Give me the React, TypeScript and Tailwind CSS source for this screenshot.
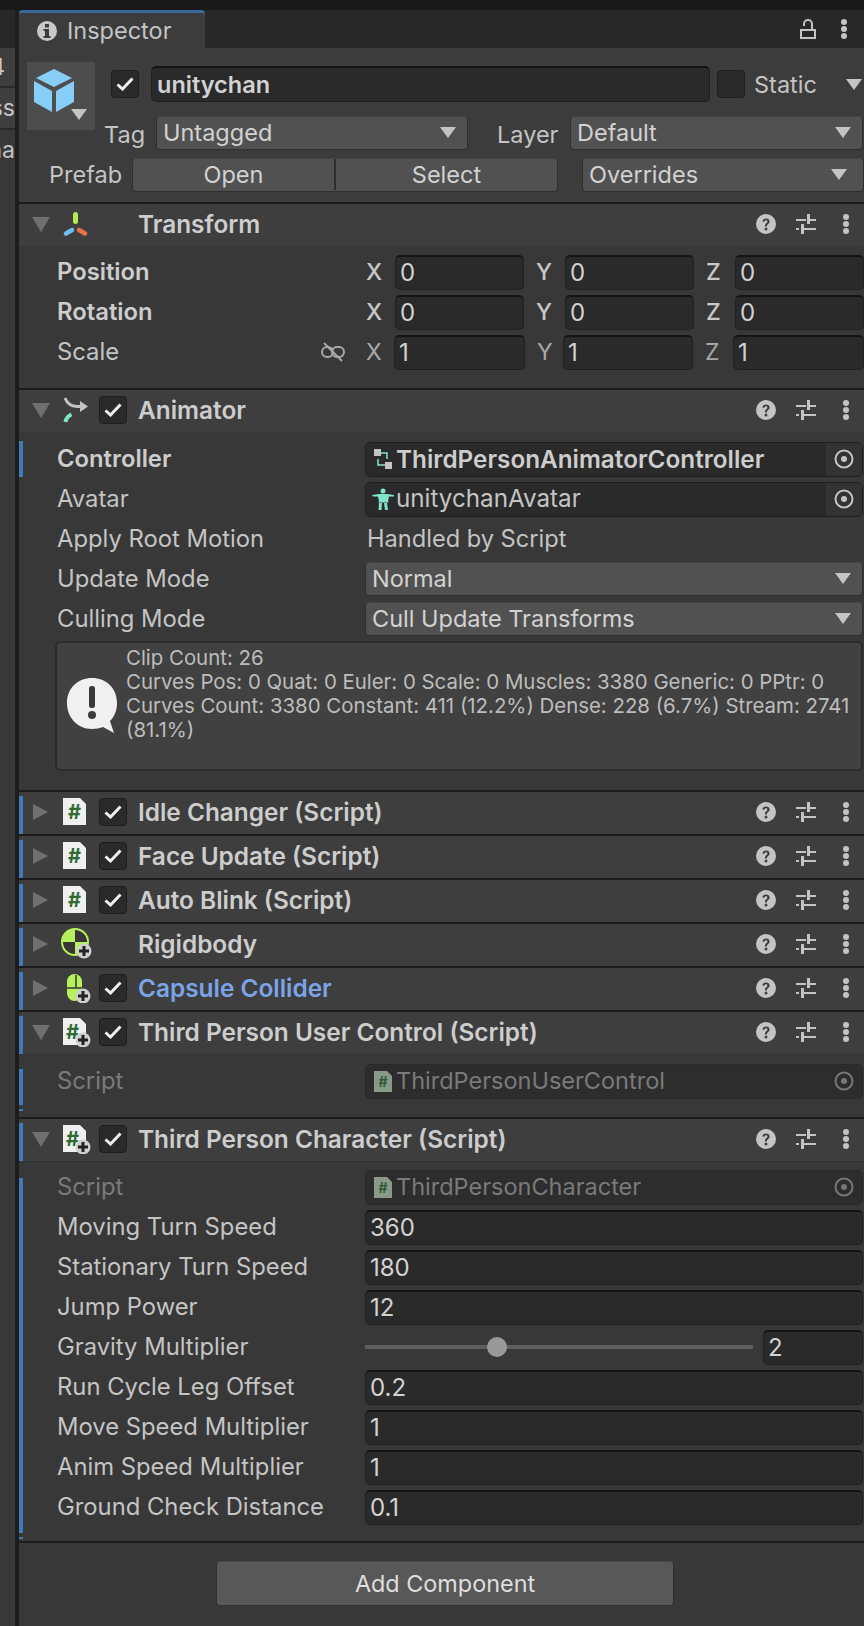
import React from 'react';

const FONT = 'font-["Inter","Liberation_Sans",sans-serif]';

function TriDown({ className = 'fill-[#c4c4c4]' }: { className?: string }) {
  return (
    <svg width="16" height="11" viewBox="0 0 16 11" className={`shrink-0 ${className}`}>
      <path d="M0 0h16l-8 11z" />
    </svg>
  );
}

function Foldout({ open }: { open: boolean }) {
  return (
    <div className="w-[34px] shrink-0 flex justify-center pl-[1px]">
      {open ? (
        <svg width="18" height="15" viewBox="0 0 18 15" className="fill-[#6f6f6f]">
          <path d="M0 0h18l-9 15z" />
        </svg>
      ) : (
        <svg width="15" height="16" viewBox="0 0 15 16" className="fill-[#6f6f6f]">
          <path d="M0 0l15 8-15 8z" />
        </svg>
      )}
    </div>
  );
}

function Checkbox({ checked = true }: { checked?: boolean }) {
  return (
    <div className="w-[28px] h-[28px] shrink-0 rounded-[4px] bg-[#2a2a2a] border border-[#1e1e1e] flex items-center justify-center">
      {checked && (
        <svg width="18" height="14" viewBox="0 0 18 14" fill="none" stroke="#f0f0f0" strokeWidth="3">
          <path d="M1.5 7.5l5 4.5 10-10.5" />
        </svg>
      )}
    </div>
  );
}

function Dots() {
  return (
    <svg width="8" height="20" viewBox="0 0 8 20" className="fill-[#c4c4c4] shrink-0">
      <circle cx="4" cy="3" r="3" />
      <circle cx="4" cy="10" r="3" />
      <circle cx="4" cy="17" r="3" />
    </svg>
  );
}

function HeaderTools() {
  return (
    <div className="flex items-center ml-auto">
      <svg width="20" height="20" viewBox="0 0 20 20">
        <circle cx="10" cy="10" r="10" fill="#c4c4c4" />
        <path d="M6.5 7.6c0-2 1.6-3.2 3.6-3.2s3.5 1.1 3.5 3c0 2.6-2.8 2.6-2.8 5H8.900c0-3.200 2.500-3.100 2.500-4.800 0-.8-.6-1.300-1.400-1.300-.9 0-1.400.6-1.500 1.400z" fill="#3e3e3e" />
        <circle cx="10" cy="15" r="1.500" fill="#3e3e3e" />
      </svg>
      <svg width="20" height="20" viewBox="0 0 20 20" className="ml-[20px] fill-[#c4c4c4]">
        <rect x="0" y="5" width="10" height="2" />
        <rect x="11" y="0" width="3" height="10" />
        <rect x="14" y="5" width="6" height="2" />
        <rect x="0" y="14" width="3" height="2" />
        <rect x="5" y="10" width="3" height="10" />
        <rect x="8" y="14" width="12" height="2" />
      </svg>
      <div className="ml-[26px] mr-[14px] flex">
        <Dots />
      </div>
    </div>
  );
}

function PlusBadge({ x = 16, y = 16 }: { x?: number; y?: number }) {
  return (
    <g>
      <circle cx={x} cy={y} r="7.500" fill="#cfcfcf" />
      <path d={`M${x - 5} ${y}h10M${x} ${y - 5}v10`} stroke="#222" strokeWidth="3" />
    </g>
  );
}

function ScriptIcon({ plus = false }: { plus?: boolean }) {
  return (
    <svg width="30" height="30" viewBox="0 0 30 30" className="shrink-0">
      <path d="M1 1h17l6 6v21H1z" fill="#f0f0f0" />
      <text x={plus ? 4 : 12.5} y="21.500" textAnchor={plus ? 'start' : 'middle'} fontSize="20" fontWeight="700" fill="#2f6b35" fontFamily="Inter">#</text>
      {plus && <PlusBadge x={21} y={23} />}
    </svg>
  );
}

function TransformIcon() {
  return (
    <svg width="30" height="30" viewBox="0 0 30 30" className="shrink-0">
      <path d="M13.500 5.500v7" stroke="#b5e853" strokeWidth="5" strokeLinecap="round" />
      <path d="M4 24.500l6-3.500" stroke="#6cbdf2" strokeWidth="4.500" strokeLinecap="round" />
      <path d="M17 21l6 3.500" stroke="#ea7048" strokeWidth="4.500" strokeLinecap="round" />
    </svg>
  );
}

function AnimatorIcon() {
  return (
    <svg width="30" height="30" viewBox="0 0 30 30" fill="none" className="shrink-0">
      <path d="M3 3c2 5 5 8.500 12 8.500h4" stroke="#c4c4c4" strokeWidth="3" />
      <path d="M18 6l8 5.500-8 5.500z" fill="#c4c4c4" />
      <path d="M3.500 27c.5-3 2-6 6-7.500" stroke="#7fe6cc" strokeWidth="4" />
    </svg>
  );
}

function RigidbodyIcon() {
  return (
    <svg width="32" height="32" viewBox="0 0 32 32" className="shrink-0">
      <circle cx="14" cy="14" r="13" fill="#363636" stroke="#b6f05c" strokeWidth="2" />
      <path d="M14 1a13 13 0 0 0-13 13h13z" fill="#b6f05c" />
      <path d="M14 14h13a13 13 0 0 1-13 13z" fill="#b6f05c" />
      <PlusBadge x={23} y={23} />
    </svg>
  );
}

function CapsuleIcon() {
  return (
    <svg width="30" height="30" viewBox="0 0 30 30" className="shrink-0">
      <rect x="5" y="1" width="15" height="27" rx="7.500" fill="#b6f05c" />
      <path d="M5 15h15M14 2v13" stroke="#363636" strokeWidth="1.500" fill="none" />
      <PlusBadge x={21} y={23} />
    </svg>
  );
}

function Header({
  title,
  open,
  icon,
  check = true,
  marked = false,
  color = 'text-[#cdcdcd]',
}: {
  title: string;
  open: boolean;
  icon: React.ReactNode;
  check?: boolean;
  marked?: boolean;
  color?: string;
}) {
  return (
    <>
      <div className="h-[2px] bg-[#1c1c1c]" />
      <div className="h-[42px] pb-[2px] bg-[#3e3e3e] flex items-center">
        <div className={`w-[4px] self-stretch shrink-0 my-[4px] -mb-[2px] ${marked ? 'bg-[#3f7cb5]' : ''}`} />
        <Foldout open={open} />
        <div className="w-[30px] ml-[5px] shrink-0 flex justify-center">{icon}</div>
        <div className="w-[28px] ml-[7px] shrink-0">{check && <Checkbox />}</div>
        <span className={`ml-[11px] text-[24.4px] font-semibold whitespace-nowrap ${color}`}>{title}</span>
        <HeaderTools />
      </div>
    </>
  );
}

function Row({
  label,
  children,
  bold,
  dim,
  marked,
  barClassName = '',
}: {
  label: string;
  children?: React.ReactNode;
  bold?: boolean;
  dim?: boolean;
  marked?: boolean;
  barClassName?: string;
}) {
  return (
    <div className="h-[40px] flex items-center">
      <div className={`w-[4px] shrink-0 h-[36px] ${marked ? 'bg-[#3f7cb5]' : ''} ${barClassName}`} />
      <span
        className={`pl-[34px] w-[342px] shrink-0 text-[23.800px] whitespace-nowrap ${bold ? 'font-semibold text-[#cdcdcd]' : dim ? 'text-[#7a7a7a]' : 'text-[#c4c4c4]'}`}
      >
        {label}
      </span>
      <div className="flex-1 min-w-0 mr-[1px] flex items-center">{children}</div>
    </div>
  );
}

function Input({ value, className = 'flex-1' }: { value: string; className?: string }) {
  return (
    <div className={`h-[35px] rounded-[5px] bg-[#2a2a2a] border border-[#202020] border-t-[#141414] border-t-2 pl-[4px] flex items-center text-[24px] text-[#d2d2d2] overflow-hidden ${className}`}>
      {value}
    </div>
  );
}

function Dropdown({ value, className = 'flex-1' }: { value: string; className?: string }) {
  return (
    <div className={`h-[34px] pb-[1px] rounded-[4px] bg-[#515151] border border-[#2f2f2f] border-t-[#444444] pl-[6px] pr-[11px] flex items-center justify-between text-[23.500px] text-[#d2d2d2] ${className}`}>
      <span>{value}</span>
      <TriDown />
    </div>
  );
}

function ObjectField({ icon, value, bold, dim }: { icon: React.ReactNode; value: string; bold?: boolean; dim?: boolean }) {
  return (
    <div className={`flex-1 h-[35px] rounded-[5px] border flex items-center overflow-hidden ${dim ? 'bg-[#2d2d2d] border-[#292929]' : 'bg-[#2a2a2a] border-[#1f1f1f]'}`}>
      <div className="w-[29px] shrink-0 flex justify-center pl-[4px]">{icon}</div>
      <span className={`ml-[1px] whitespace-nowrap ${bold ? 'text-[24.3px] font-semibold text-[#cdcdcd]' : dim ? 'text-[23.500px] text-[#7a7a7a]' : 'text-[24.2px] text-[#c4c4c4]'}`}>{value}</span>
      <div className={`ml-auto h-full w-[36px] shrink-0 flex items-center justify-center ${dim ? 'bg-[#2d2d2d]' : 'bg-[#333333]'}`}>
        <svg width="20" height="20" viewBox="0 0 20 20" fill="none">
          <circle cx="10" cy="10" r="8.500" stroke={dim ? '#777777' : '#c4c4c4'} strokeWidth="2" />
          <circle cx="10" cy="10" r="3" fill={dim ? '#777777' : '#c4c4c4'} />
        </svg>
      </div>
    </div>
  );
}

function SmallScript() {
  return (
    <svg width="18" height="21" viewBox="0 0 18 21">
      <path d="M0 0h13l5 5v16H0z" fill="#8a9a88" />
      <text x="9" y="16" textAnchor="middle" fontSize="14" fontWeight="700" fill="#2f5a33" fontFamily="Inter">#</text>
    </svg>
  );
}

function Vector({ values, light }: { values: string[]; light?: boolean }) {
  const axes = ['X', 'Y', 'Z'];
  const labelWidths = light ? ['w-[29px]', 'w-[27px]', 'w-[29px]'] : ['w-[30px]', 'w-[30px]', 'w-[30px]'];
  const fieldWidths = light ? ['w-[131px]', 'w-[130px]', 'w-[131px]'] : ['w-[129px]', 'w-[129px]', 'w-[129px]'];
  return (
    <div className="flex-1 flex items-center -mr-[1px]">
      {axes.map((a, i) => (
        <div key={a} className={`flex items-center ${i === 0 ? '' : 'ml-[11px]'}`}>
          <span className={`pl-[1px] text-[23px] ${labelWidths[i]} ${light ? 'text-[#a8a8a8]' : 'font-medium text-[#c8c8c8]'}`}>{a}</span>
          <Input value={values[i]} className={fieldWidths[i]} />
        </div>
      ))}
    </div>
  );
}

const scriptRows = [
  { title: 'Idle Changer (Script)' },
  { title: 'Face Update (Script)' },
  { title: 'Auto Blink (Script)' },
];

const characterRows = [
  ['Moving Turn Speed', '360'],
  ['Stationary Turn Speed', '180'],
  ['Jump Power', '12'],
];

const characterRows2 = [
  ['Run Cycle Leg Offset', '0.2'],
  ['Move Speed Multiplier', '1'],
  ['Anim Speed Multiplier', '1'],
  ['Ground Check Distance', '0.1'],
];

export default function App() {
  return (
    <div className={`w-[864px] h-[1626px] overflow-hidden bg-[#383838] flex flex-col ${FONT}`}>
      <div className="h-[10px] bg-[#191919] shrink-0" />
      <div className="flex flex-1 min-h-0">
        {/* hierarchy panel cut off on the left */}
        <div className="w-[15px] shrink-0 text-[23px] text-[#c4c4c4] overflow-hidden">
          <div className="h-[38px] bg-[#282828]" />
          <div className="h-[40px] bg-[#3e3e3e] border-b-2 border-[#2a2a2a] flex justify-end items-center pr-[10px] whitespace-nowrap">4</div>
          <div className="h-[42px] bg-[#3e3e3e] border-b-2 border-[#2a2a2a] flex justify-end items-center whitespace-nowrap">ss</div>
          <div className="h-[40px] flex justify-end items-center whitespace-nowrap">na</div>
        </div>
        <div className="w-[4px] shrink-0 bg-[#1d1d1d]" />

        <div className="flex-1 min-w-0 flex flex-col">
          {/* tab bar */}
          <div className="h-[38px] bg-[#282828] flex items-stretch shrink-0">
            <div className="w-[186px] bg-[#3c3c3c] border-t-[3px] border-[#3a6a9a] rounded-t-[4px] flex items-center pl-[18px] text-[23.500px] text-[#c4c4c4]">
              <svg width="20" height="20" viewBox="0 0 20 20">
                <circle cx="10" cy="10" r="10" fill="#c8c8c8" />
                <rect x="8" y="3" width="4" height="3.500" fill="#3c3c3c" />
                <path d="M6.500 8h5.500v7h1.500v2h-7v-2H8v-5H6.500z" fill="#3c3c3c" />
              </svg>
              <span className="ml-[10px]">Inspector</span>
            </div>
            <div className="ml-auto flex items-center pr-[16px]">
              <svg width="16" height="20" viewBox="0 0 16 20" fill="none" stroke="#c4c4c4" strokeWidth="2">
                <path d="M12 11V5a4 4 0 0 0-8 0v2" />
                <rect x="1" y="11" width="14" height="8" />
              </svg>
              <div className="ml-[24px] flex"><Dots /></div>
            </div>
          </div>

          {/* game object header */}
          <div className="h-[154px] bg-[#3c3c3c] shrink-0 text-[23.500px] text-[#c4c4c4]">
            <div className="flex h-[102px]">
              <div className="ml-[8px] mt-[14px] w-[68px] h-[68px] shrink-0 bg-[#4d4d4d] relative">
                <svg width="40" height="43" viewBox="0 0 40 43" className="ml-[7px] mt-[7px]">
                  <path d="M20 0l18 9-18 9L2 9z" fill="#86cdf7" />
                  <path d="M0 12l18 10v21L0 33z" fill="#86cdf7" />
                  <path d="M22 22l18-10v21L22 43z" fill="#86cdf7" />
                </svg>
                <div className="absolute right-[8px] bottom-[10px] flex"><TriDown /></div>
              </div>
              <div className="flex-1 min-w-0">
                <div className="flex items-start mt-[18px] h-[36px]">
                  <div className="ml-[16px] mt-[4px]"><Checkbox /></div>
                  <div className="ml-[12px] w-[559px] h-[36px] rounded-[5px] bg-[#2a2a2a] border border-[#202020] border-t-2 border-t-[#141414] flex items-center pl-[5px] font-semibold text-[#d2d2d2]">unitychan</div>
                  <div className="ml-[7px] mt-[4px]"><Checkbox checked={false} /></div>
                  <span className="ml-[9px] mt-[2px] leading-[34px]">Static</span>
                  <div className="ml-[29px] mt-[13px] flex"><TriDown /></div>
                </div>
                <div className="flex items-center mt-[14px] h-[34px]">
                  <span className="ml-[9px] w-[43px] leading-[34px] translate-y-[2px]">Tag</span>
                  <Dropdown value="Untagged" className="ml-[9px] w-[312px]" />
                  <span className="ml-[29px] w-[65px] leading-[34px] translate-y-[2px]">Layer</span>
                  <Dropdown value="Default" className="ml-[8px] w-[293px]" />
                </div>
              </div>
            </div>
            <div className="flex items-center mt-[8px] ml-[30px] h-[34px]">
              <span className="w-[83px] leading-[34px]">Prefab</span>
              <div className="flex w-[426px] h-[34px] pb-[1px] rounded-[4px] bg-[#515151] border border-[#2f2f2f] border-t-[#444444] text-[#d2d2d2]">
                <div className="w-[203px] flex items-center justify-center border-r-2 border-[#2f2f2f]">Open</div>
                <div className="flex-1 flex items-center justify-center">Select</div>
              </div>
              <Dropdown value="Overrides" className="ml-[24px] flex-1 pr-[16px]" />
            </div>
          </div>

          {/* transform */}
          <Header title="Transform" open icon={<TransformIcon />} check={false} />
          <div className="pt-[6px] pb-[16px]">
            <Row label="Position" bold><Vector values={['0', '0', '0']} /></Row>
            <Row label="Rotation" bold><Vector values={['0', '0', '0']} /></Row>
            <div className="h-[40px] flex items-center">
              <div className="w-[4px] shrink-0" />
              <span className="pl-[34px] w-[298px] shrink-0 text-[23.800px] text-[#c4c4c4]">Scale</span>
              <svg width="24" height="22" viewBox="0 0 24 22" fill="none" stroke="#a8a8a8" strokeWidth="2" className="shrink-0">
                <rect x="1" y="6" width="11" height="10" rx="5" />
                <rect x="11" y="6" width="12" height="10" rx="5" />
                <path d="M3 2l18 18" />
              </svg>
              <div className="w-[20px] shrink-0" />
              <Vector values={['1', '1', '1']} light />
            </div>
          </div>

          {/* animator */}
          <Header title="Animator" open icon={<AnimatorIcon />} />
          <div className="pt-[7px] pb-[19px]">
            <Row label="Controller" bold marked>
              <ObjectField
                bold
                value="ThirdPersonAnimatorController"
                icon={
                  <svg width="18" height="20" viewBox="0 0 18 20" fill="none">
                    <rect x="0" y="0" width="7" height="7" fill="#c4c4c4" />
                    <rect x="11" y="13" width="7" height="7" fill="#c4c4c4" />
                    <path d="M7 4h6v6M11 16H4v-6" stroke="#7fe6cc" strokeWidth="1.500" />
                  </svg>
                }
              />
            </Row>
            <Row label="Avatar">
              <ObjectField
                value="unitychanAvatar"
                icon={
                  <svg width="22" height="22" viewBox="0 0 22 22" fill="#7fe6cc">
                    <circle cx="11" cy="3" r="2.500" />
                    <path d="M0 7l7-1h8l7 1v1.500l-5 0-1 5 1 1H6l1-1-1-5-5 0z" />
                    <path d="M7 15h3l-.500 7H6.500zM12 15h3l1 7h-3z" />
                  </svg>
                }
              />
            </Row>
            <Row label="Apply Root Motion">
              <span className="pl-[2px] text-[23.600px] text-[#c4c4c4]">Handled by Script</span>
            </Row>
            <Row label="Update Mode"><Dropdown value="Normal" /></Row>
            <Row label="Culling Mode"><Dropdown value="Cull Update Transforms" /></Row>
            <div className="ml-[36px] mr-[1px] mt-[2px] h-[130px] rounded-[5px] bg-[#414141] border-2 border-[#2c2c2c] flex">
              <svg width="50" height="56" viewBox="0 0 50 56" className="ml-[10px] mt-[35px] shrink-0">
                <path d="M25 0c14 0 25 10 25 25 0 8-3 14-7 18l4 12-11-6c-3 1-7 2-11 2C11 51 0 40 0 25S11 0 25 0z" fill="#f0f0f0" />
                <rect x="22" y="8" width="6" height="22" rx="2.500" fill="#3a3a3a" />
                <circle cx="25" cy="37" r="4" fill="#3a3a3a" />
              </svg>
              <div className="ml-[9px] text-[20.400px] leading-[24px] text-[#bdbdbd] pt-[3px] flex-1 min-w-0 whitespace-nowrap">
                <div>Clip Count: 26</div>
                <div>Curves Pos: 0 Quat: 0 Euler: 0 Scale: 0 Muscles: 3380 Generic: 0 PPtr: 0</div>
                <div>Curves Count: 3380 Constant: 411 (12.2%) Dense: 228 (6.7%) Stream: 2741</div>
                <div>(81.1%)</div>
              </div>
            </div>
          </div>

          {/* collapsed components */}
          {scriptRows.map((r) => (
            <Header key={r.title} title={r.title} open={false} marked icon={<ScriptIcon />} />
          ))}
          <Header title="Rigidbody" open={false} marked check={false} icon={<RigidbodyIcon />} />
          <Header title="Capsule Collider" open={false} marked color="text-[#7ba4e8]" icon={<CapsuleIcon />} />

          <Header title="Third Person User Control (Script)" open marked icon={<ScriptIcon plus />} />
          <div className="border-t border-[#333333] h-[63px] pt-[6px]">
            <Row label="Script" dim marked barClassName="translate-y-[6px]">
              <ObjectField dim value="ThirdPersonUserControl" icon={<SmallScript />} />
            </Row>
            <div className="w-[4px] h-[2px] mt-[8px] bg-[#3f7cb5]" />
          </div>

          <Header title="Third Person Character (Script)" open marked icon={<ScriptIcon plus />} />
          <div className="border-t border-[#333333] h-[380px] pt-[5px] relative">
            <div className="absolute left-0 top-[16px] w-[4px] h-[355px] bg-[#3f7cb5]" />
            <div className="absolute left-0 top-[375px] w-[4px] h-[2px] bg-[#3f7cb5]" />
            <Row label="Script" dim>
              <ObjectField dim value="ThirdPersonCharacter" icon={<SmallScript />} />
            </Row>
            {characterRows.map(([label, value]) => (
              <Row key={label} label={label}><Input value={value} /></Row>
            ))}
            <Row label="Gravity Multiplier">
              <div className="flex-1 h-[4px] bg-[#5e5e5e] relative">
                <div className="absolute left-[122px] -top-[8px] w-[20px] h-[20px] rounded-full bg-[#999999]" />
              </div>
              <Input value="2" className="w-[100px] ml-[10px]" />
            </Row>
            {characterRows2.map(([label, value]) => (
              <Row key={label} label={label}><Input value={value} /></Row>
            ))}
          </div>

          <div className="h-[2px] bg-[#1c1c1c] shrink-0" />
          <div className="flex pt-[18px]">
            <div className="ml-[197px] w-[458px] h-[45px] rounded-[4px] bg-[#585858] border border-[#303030] border-t-[#4a4a4a] flex items-center justify-center text-[23.400px] text-[#dedede]">
              Add Component
            </div>
          </div>
        </div>
      </div>
    </div>
  );
}
